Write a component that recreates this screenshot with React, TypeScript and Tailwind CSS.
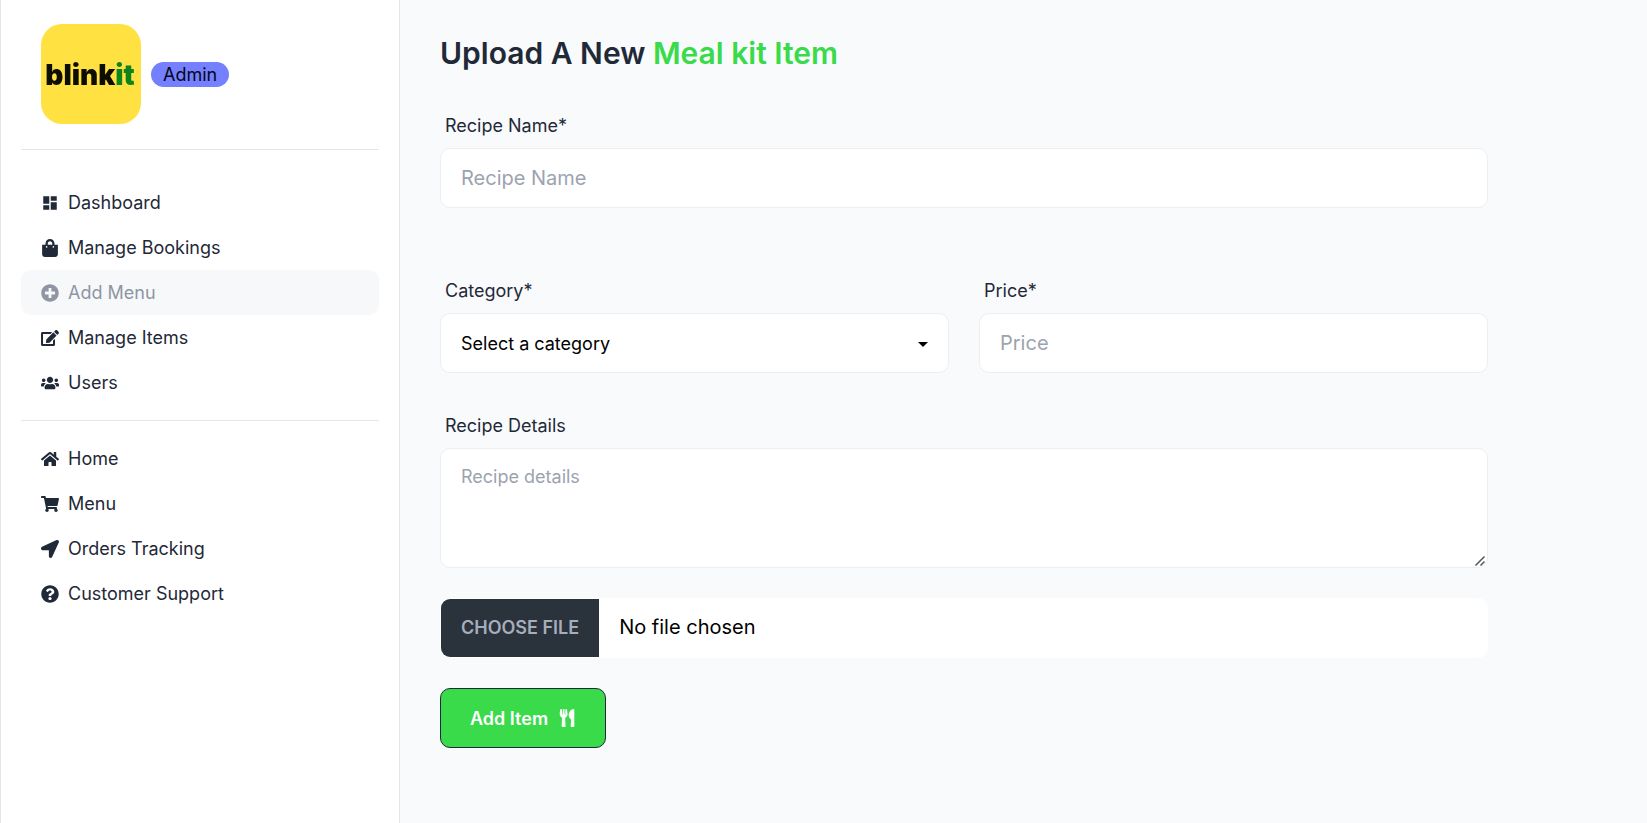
import type { ReactNode } from "react";
import {
  FaEdit,
  FaHome,
  FaLocationArrow,
  FaPlusCircle,
  FaQuestionCircle,
  FaShoppingBag,
  FaShoppingCart,
  FaUsers,
  FaUtensils,
} from "react-icons/fa";
import { MdDashboard } from "react-icons/md";

type NavItem = { label: string; icon: ReactNode; active?: boolean };

const adminLinks: NavItem[] = [
  { label: "Dashboard", icon: <MdDashboard /> },
  { label: "Manage Bookings", icon: <FaShoppingBag /> },
  { label: "Add Menu", icon: <FaPlusCircle />, active: true },
  { label: "Manage Items", icon: <FaEdit /> },
  { label: "Users", icon: <FaUsers /> },
];

const siteLinks: NavItem[] = [
  { label: "Home", icon: <FaHome /> },
  { label: "Menu", icon: <FaShoppingCart /> },
  { label: "Orders Tracking", icon: <FaLocationArrow /> },
  { label: "Customer Support", icon: <FaQuestionCircle /> },
];

function NavList({ items }: { items: NavItem[] }) {
  return (
    <ul>
      {items.map((item) => (
        <li key={item.label}>
          <a
            href="#"
            aria-current={item.active ? "page" : undefined}
            className={
              item.active
                ? "flex h-[45px] items-center gap-[9px] rounded-[10px] bg-[#f7f8fa] px-5 text-[#8f95a3]"
                : "flex h-[45px] items-center gap-[9px] rounded-[10px] px-5"
            }
          >
            {item.icon}
            {item.label}
          </a>
        </li>
      ))}
    </ul>
  );
}

function Logo() {
  return (
    <svg viewBox="0 0 100 100" className="size-[100px]" role="img" aria-label="blinkit">
      <filter id="soften">
        <feGaussianBlur stdDeviation="0.5" />
      </filter>
      <rect width="100" height="100" rx="21" fill="#ffe141" />
      <text
        x="49"
        y="61"
        textAnchor="middle"
        fontFamily="Inter, sans-serif"
        fontWeight="900"
        fontSize="28"
        fill="#0a0a00"
        filter="url(#soften)"
      >
        blink<tspan fill="#0c831f">it</tspan>
      </text>
    </svg>
  );
}

function Field({ id, label, children }: { id: string; label: string; children: ReactNode }) {
  return (
    <div className="flex min-w-0 flex-1 flex-col">
      <label htmlFor={id} className="flex h-[45px] items-center px-[5px]">
        {label}
      </label>
      {children}
    </div>
  );
}

export default function App() {
  return (
    <div className="flex min-h-screen bg-[#f9fafc] font-['Inter',sans-serif] text-[18px] leading-[25px] text-[#1f2937]">
      <aside className="w-[400px] shrink-0 border-x border-[#e5e6e9] bg-white px-5 pt-6">
        <a href="#" className="flex items-center gap-2.5 px-5">
          <Logo />
          <span className="rounded-full bg-[#7480ff] px-3 text-[#050617]">Admin</span>
        </a>
        <hr className="mt-[25px] mb-[30px] border-[#e5e6e9]" />
        <nav aria-label="Admin">
          <NavList items={adminLinks} />
        </nav>
        <hr className="my-[15px] border-[#e5e6e9]" />
        <nav aria-label="Site">
          <NavList items={siteLinks} />
        </nav>
      </aside>

      <main className="min-w-0 flex-1 px-10 pt-[33px]">
        <h2 className="text-[30px] leading-10 font-semibold">
          Upload A New <span className="text-[#39db4a]">Meal kit Item</span>
        </h2>

        <form className="mt-[30px] flex max-w-[1048px] flex-col gap-[30px]">
          <Field id="name" label="Recipe Name*">
            <input
              id="name"
              type="text"
              placeholder="Recipe Name"
              className="h-[60px] w-full rounded-[10px] border border-[#eceef0] bg-white px-5 text-xl placeholder:text-[#9ca3af]"
            />
          </Field>

          <div className="mt-[30px] flex gap-[30px]">
            <Field id="category" label="Category*">
              <div className="relative">
                <select
                  id="category"
                  defaultValue=""
                  className="h-[60px] w-full appearance-none rounded-[10px] border border-[#eceef0] bg-white px-5 text-black"
                >
                  <option value="" disabled>
                    Select a category
                  </option>
                  <option value="salad">Salad</option>
                  <option value="pizza">Pizza</option>
                  <option value="soup">Soup</option>
                  <option value="dessert">Dessert</option>
                  <option value="drinks">Drinks</option>
                </select>
                <svg
                  viewBox="0 0 10 5"
                  aria-hidden="true"
                  className="pointer-events-none absolute top-[29px] right-[21px] h-[5px] w-2.5"
                >
                  <path d="M0 0h10L5 5z" fill="#000" />
                </svg>
              </div>
            </Field>
            <Field id="price" label="Price*">
              <input
                id="price"
                type="number"
                placeholder="Price"
                className="h-[60px] w-full rounded-[10px] border border-[#eceef0] bg-white px-5 text-xl placeholder:text-[#9ca3af]"
              />
            </Field>
          </div>

          <Field id="details" label="Recipe Details">
            <div className="relative flex">
              <textarea
                id="details"
                placeholder="Recipe details"
                className="h-[120px] w-full resize-y rounded-[10px] border border-[#eceef0] bg-white px-5 py-[15px] placeholder:text-[#9ca3af] [&::-webkit-resizer]:bg-transparent"
              />
              <svg
                viewBox="0 0 10 10"
                aria-hidden="true"
                className="pointer-events-none absolute right-[3px] bottom-[2px] size-2.5"
              >
                <path d="M0.5 9.5l9-9M5.5 9.5l4-4" stroke="#555" strokeWidth="1.5" />
              </svg>
            </div>
          </Field>

          <input
            type="file"
            aria-label="Recipe image"
            className="h-[60px] w-full overflow-hidden rounded-[10px] border border-white bg-white text-xl leading-[56px] text-black file:mr-5 file:h-[58px] file:bg-[#2a323c] file:px-5 file:text-[18px] file:font-semibold file:text-[#a6adbb] file:uppercase"
          />

          <button
            type="button"
            className="flex h-[60px] items-center gap-2.5 self-start rounded-[10px] border border-[#1f2937] bg-[#39db4a] px-[29px] font-semibold text-white"
          >
            Add Item
            <FaUtensils />
          </button>
        </form>
      </main>
    </div>
  );
}
